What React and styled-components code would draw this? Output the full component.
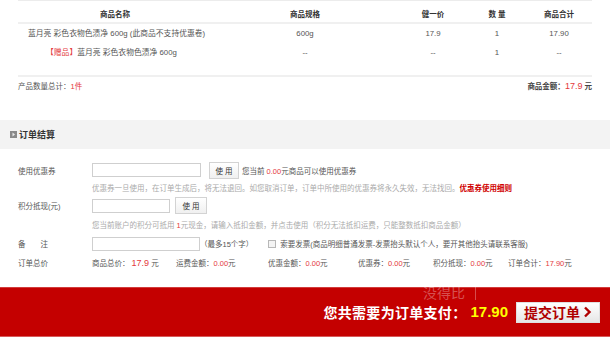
import React from "react";
import styled, { createGlobalStyle } from "styled-components";

const GlobalStyle = createGlobalStyle`
  html, body {
    margin: 0;
    padding: 0;
    background: #fff;
  }
  body {
    width: 610px;
    height: 337px;
    overflow: hidden;
    font-family: "Liberation Sans", "Noto Sans CJK SC", sans-serif;
    font-size: 7.5px;
    color: #555;
  }
`;

const items = [
  {
    name: "蓝月亮 彩色衣物色渍净 600g (此商品不支持优惠卷)",
    spec: "600g",
    price: "17.9",
    qty: "1",
    total: "17.90",
  },
  {
    name: "蓝月亮 彩色衣物色渍净 600g",
    gift: true,
    spec: "--",
    price: "--",
    qty: "1",
    total: "--",
  },
];

const totals = [
  { label: "运费金额：", value: "0.00" },
  { label: "优惠金额：", value: "0.00" },
  { label: "优惠券：", value: "0.00" },
  { label: "积分抵现：", value: "0.00" },
  { label: "订单合计：", value: "17.90" },
];

const ChevronIcon = () => (
  <svg width="9" height="12" viewBox="0 0 9 12">
    <path d="M2 1.5 L6.5 6 L2 10.5" fill="none" stroke="#b00000" strokeWidth="2.4" />
  </svg>
);

const SectionIcon = () => (
  <svg width="7" height="7" viewBox="0 0 7 7">
    <rect x="0" y="0" width="7" height="7" fill="#8a8a8a" />
    <path d="M2.5 1.5 L5 3.5 L2.5 5.5 Z" fill="#e8e8e8" />
  </svg>
);

const App = () => {
  return (
    <Page>
      <GlobalStyle />
      <Table>
        <HeadRow>
          <div>商品名称</div>
          <div>商品规格</div>
          <div>健一价</div>
          <div>数 量</div>
          <div>商品合计</div>
        </HeadRow>
        {items.map((item, i) => (
          <ItemRow key={i}>
            <NameCell gift={item.gift}>
              {item.gift && <Red>【赠品】</Red>}
              {item.name}
            </NameCell>
            <div>{item.spec}</div>
            <div>{item.price}</div>
            <div>{item.qty}</div>
            <div>{item.total}</div>
          </ItemRow>
        ))}
        <Summary>
          <span>
            产品数量总计：<Red>1件</Red>
          </span>
          <Amount>
            商品金额：<BigRed>17.9</BigRed> 元
          </Amount>
        </Summary>
      </Table>

      <SectionBar>
        <SectionIcon />
        <SectionTitle>订单结算</SectionTitle>
      </SectionBar>

      <Form>
        <FormRow h={18}>
          <Label>使用优惠券</Label>
          <Field>
            <TextInput w={109} />
            <UseButton w={30} h={17} gap={8}>使 用</UseButton>
            <Note>
              您当前 <Red>0.00</Red>元商品可以使用优惠券
            </Note>
          </Field>
        </FormRow>
        <FormRow h={17}>
          <span />
          <Hint>
            优惠券一旦使用，在订单生成后，将无法退回。如您取消订单，订单中所使用的优惠券将永久失效，无法找回。
            <RuleLink>优惠券使用细则</RuleLink>
          </Hint>
        </FormRow>
        <FormRow h={19}>
          <Label>积分抵现(元)</Label>
          <Field>
            <TextInput w={78} />
            <UseButton w={32} h={17} gap={5}>使 用</UseButton>
          </Field>
        </FormRow>
        <FormRow h={19}>
          <span />
          <Hint>
            您当前账户的积分可抵用 <Red>1</Red>元现金，请输入抵扣金额，并点击使用（积分无法抵扣运费，只能整数抵扣商品金额）
          </Hint>
        </FormRow>
        <FormRow h={19}>
          <Label>备{"\u3000\u3000"}注</Label>
          <Field>
            <TextInput w={108} />
            <Note>（最多15个字）</Note>
            <Check />
            <Note>索要发票(商品明细普通发票-发票抬头默认个人，要开其他抬头请联系客服)</Note>
          </Field>
        </FormRow>
        <FormRow h={19}>
          <Label>订单总价</Label>
          <TotalsGrid>
            <span>
              商品总价： <BigRed>17.9</BigRed> 元
            </span>
            {totals.map((t) => (
              <span key={t.label}>
                {t.label}
                <Red>{t.value}</Red>元
              </span>
            ))}
          </TotalsGrid>
        </FormRow>
      </Form>

      <PayBar>
        <Watermark>
          没得比<WatermarkLine />
        </Watermark>
        <PayText>您共需要为订单支付：</PayText>
        <PayAmount>17.90</PayAmount>
        <SubmitButton>
          提交订单
          <ChevronIcon />
        </SubmitButton>
      </PayBar>
    </Page>
  );
};

export default App;

const Page = styled.div`
  width: 610px;
  display: flex;
  flex-direction: column;
`;

const Table = styled.div`
  margin: 0 18px;
  border-top: 1px solid #ececec;
`;

const Row = styled.div`
  display: grid;
  grid-template-columns: 194px 186px 70px 58px 66px;
  text-align: center;
`;

const HeadRow = styled(Row)`
  padding: 8px 0 1px;
  line-height: 12px;
  font-weight: bold;
  color: #333;
  border-bottom: 2px solid #f0f0f0;
`;

const ItemRow = styled(Row)`
  line-height: 19px;
  font-size: 7.8px;
  color: #555;
`;

const NameCell = styled.div`
  text-align: left;
  padding-left: ${(p) => (p.gift ? "28px" : "10px")};
  white-space: nowrap;
`;

const Red = styled.span`
  color: #e4393c;
`;

const BigRed = styled.span`
  color: #e4393c;
  font-size: 9px;
`;

const Summary = styled.div`
  margin-top: 13px;
  padding-top: 2px;
  border-top: 2px solid #f0f0f0;
  display: flex;
  justify-content: space-between;
  align-items: center;
  line-height: 14px;
`;

const Amount = styled.span`
  font-weight: bold;
  color: #444;
  ${BigRed} {
    font-weight: normal;
  }
`;

const SectionBar = styled.div`
  margin-top: 26px;
  height: 29px;
  background: #f3f3f3;
  display: flex;
  align-items: center;
  gap: 2px;
  padding-left: 10px;
`;

const SectionTitle = styled.span`
  font-family: "Noto Sans CJK SC", sans-serif;
  font-size: 9px;
  font-weight: bold;
  color: #333;
`;

const Form = styled.div`
  padding-top: 12px;
  display: flex;
  flex-direction: column;
`;

const FormRow = styled.div`
  height: ${(p) => p.h}px;
  display: grid;
  grid-template-columns: 92px 1fr;
  align-items: center;
  white-space: nowrap;
`;

const Label = styled.span`
  padding-left: 18px;
  color: #555;
`;

const Field = styled.div`
  display: flex;
  align-items: center;
`;

const TextInput = styled.input`
  box-sizing: border-box;
  width: ${(p) => p.w}px;
  height: 14px;
  margin: 0;
  border: 1px solid #cfcfcf;
  background: #fff;
  outline: none;
`;

const UseButton = styled.button`
  box-sizing: border-box;
  width: ${(p) => p.w}px;
  height: ${(p) => p.h}px;
  margin: 0 3px 0 ${(p) => p.gap}px;
  padding: 0;
  border: 1px solid #d3d3d3;
  background: linear-gradient(#ffffff, #f0f0f0);
  font-family: "Liberation Sans", "Noto Sans CJK SC", sans-serif;
  font-size: 7.5px;
  color: #333;
`;

const Note = styled.span`
  color: #555;
`;

const Check = styled.span`
  box-sizing: border-box;
  width: 8px;
  height: 8px;
  margin: 0 4px 0 15px;
  border: 1px solid #b8b8b8;
  background: #f4f4f4;
`;

const Hint = styled.span`
  color: #aaa;
`;

const RuleLink = styled.span`
  color: #d00000;
  font-weight: bold;
`;

const TotalsGrid = styled.div`
  display: grid;
  grid-template-columns: 84px 92px 90px 75px 75px auto;
  align-items: baseline;
  color: #555;
`;

const PayBar = styled.div`
  position: relative;
  margin-top: 15px;
  height: 48px;
  background: #c40000;
  border-top: 1px solid #d23c3c;
  border-bottom: 1px solid #d85a5a;
  display: flex;
  align-items: center;
  justify-content: flex-end;
  padding-right: 10px;
`;

const Watermark = styled.div`
  position: absolute;
  left: 423px;
  top: -4px;
  display: flex;
  align-items: center;
  font-family: "Noto Sans CJK SC", sans-serif;
  font-size: 14px;
  line-height: 14px;
  color: rgba(255, 255, 255, 0.32);
`;

const WatermarkLine = styled.span`
  width: 1px;
  height: 16px;
  margin-left: 10px;
  background: rgba(255, 255, 255, 0.3);
`;

const PayText = styled.span`
  font-family: "Noto Sans CJK SC", sans-serif;
  font-size: 14px;
  line-height: 16px;
  font-weight: bold;
  color: #fff;
  letter-spacing: 0.3px;
`;

const PayAmount = styled.span`
  margin: 0 8px 0 4px;
  font-family: "Liberation Sans", sans-serif;
  font-size: 15px;
  line-height: 16px;
  font-weight: bold;
  color: #ffff00;
`;

const SubmitButton = styled.button`
  box-sizing: border-box;
  width: 84px;
  height: 21px;
  padding: 0;
  border: 1px solid #e0e0e0;
  background: linear-gradient(#ffffff, #e6e6e6);
  display: flex;
  align-items: center;
  justify-content: center;
  gap: 3px;
  font-family: "Noto Sans CJK SC", sans-serif;
  font-size: 14px;
  font-weight: bold;
  color: #b00000;
`;
